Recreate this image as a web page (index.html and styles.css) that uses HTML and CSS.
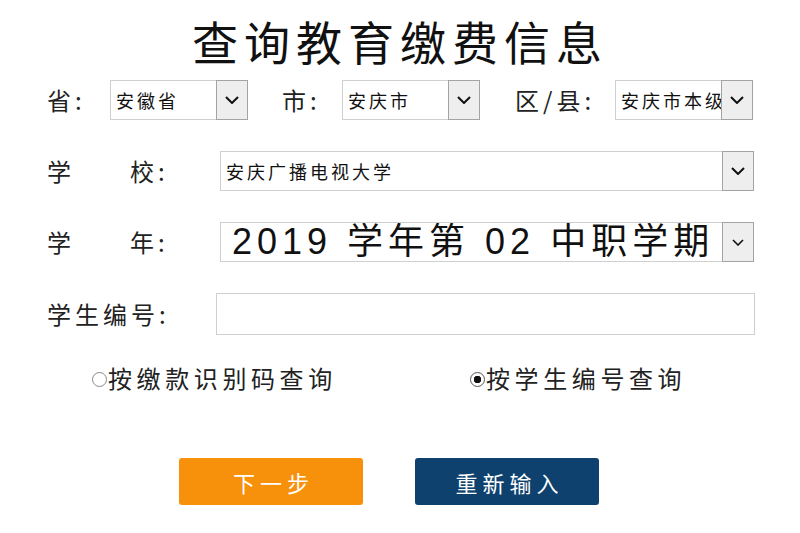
FILE: index.html
```html
<!DOCTYPE html>
<html lang="zh-CN">
<head>
    <meta charset="UTF-8">
    <meta name="viewport" content="width=device-width, initial-scale=1.0">
    <title>查询教育缴费信息</title>
    <link rel="stylesheet" href="styles.css">
</head>
<body>
    <div class="page">
        <h1>查询教育缴费信息</h1>

        <!-- 省 / 市 / 区县 -->
        <div class="row region-row">
            <label class="lbl lbl-prov">省:</label>
            <div class="select sel-small">
                <select><option>安徽省</option></select>
                <span class="arrow"><svg width="14" height="8" viewBox="0 0 14 8"><polyline points="1,1 7,7 13,1" fill="none" stroke="#111" stroke-width="2"/></svg></span>
            </div>
            <label class="lbl lbl-city">市:</label>
            <div class="select sel-small">
                <select><option>安庆市</option></select>
                <span class="arrow"><svg width="14" height="8" viewBox="0 0 14 8"><polyline points="1,1 7,7 13,1" fill="none" stroke="#111" stroke-width="2"/></svg></span>
            </div>
            <label class="lbl lbl-area">区/县:</label>
            <div class="select sel-small">
                <select><option>安庆市本级</option></select>
                <span class="arrow"><svg width="14" height="8" viewBox="0 0 14 8"><polyline points="1,1 7,7 13,1" fill="none" stroke="#111" stroke-width="2"/></svg></span>
            </div>
        </div>

        <div class="row">
            <label class="lbl lbl-wide"><span>学</span><span>校:</span></label>
            <div class="select sel-wide">
                <select><option>安庆广播电视大学</option></select>
                <span class="arrow"><svg width="14" height="8" viewBox="0 0 14 8"><polyline points="1,1 7,7 13,1" fill="none" stroke="#111" stroke-width="2"/></svg></span>
            </div>
        </div>

        <div class="row">
            <label class="lbl lbl-wide"><span>学</span><span>年:</span></label>
            <div class="select sel-wide sel-year">
                <select><option>2019 学年第 02 中职学期</option></select>
                <span class="arrow"><svg width="12" height="7" viewBox="0 0 12 7"><polyline points="1,1 6,6 11,1" fill="none" stroke="#111" stroke-width="1.6"/></svg></span>
            </div>
        </div>

        <div class="row">
            <label class="lbl lbl-id">学生编号:</label>
            <input type="text" class="text-input">
        </div>

        <div class="radio-row">
            <label class="radio-opt"><input type="radio" name="queryType">按缴款识别码查询</label>
            <label class="radio-opt"><input type="radio" name="queryType" checked>按学生编号查询</label>
        </div>

        <div class="btn-row">
            <button class="btn btn-next">下一步</button>
            <button class="btn btn-reset">重新输入</button>
        </div>
    </div>
</body>
</html>
```

FILE: styles.css
```css
/* 查询页 */
body {
    margin: 0;
    background-color: #ffffff;
    font-family: "Noto Sans CJK SC", "Liberation Sans", sans-serif;
    color: #222;
}

.page {
    width: 800px;
}

h1 {
    margin: 14px 0 0;
    font-size: 46px;
    line-height: 52px;
    font-weight: normal;
    letter-spacing: 6px;
    text-align: center;
    color: #111;
}

.row {
    display: flex;
    align-items: center;
    padding-left: 47px;
    margin-top: 31px;
}

.region-row {
    margin-top: 14px;
}

.lbl {
    flex: none;
    font-size: 24px;
    letter-spacing: 4px;
    line-height: 30px;
    white-space: nowrap;
}

.lbl-prov { width: 63px; }
.lbl-city { width: 60px; margin-left: 34px; }
.lbl-area { width: 100px; margin-left: 35px; }

.lbl-wide {
    width: 173px;
    display: flex;
}

.lbl-wide span:first-child {
    width: 83px;
}

.lbl-id {
    width: 169px;
}

/* select with grey arrow box */
.select {
    display: flex;
    height: 40px;
    box-sizing: border-box;
    border: 1px solid #cfcfcf;
    background-color: #fff;
}

.select select {
    flex: 1;
    min-width: 0;
    appearance: none;
    -webkit-appearance: none;
    border: none;
    outline: none;
    background: transparent;
    padding: 0 0 0 5px;
    font-family: inherit;
    font-size: 18px;
    letter-spacing: 3px;
    color: #111;
}

.select .arrow {
    flex: none;
    width: 30px;
    margin: -1px -1px -1px 0;
    border: 1px solid #a3a3a3;
    background-color: #eeeeee;
    display: flex;
    align-items: center;
    justify-content: center;
}

.sel-small {
    width: 138px;
}

.sel-wide {
    width: 534px;
}

.sel-year select {
    font-family: "Liberation Sans", "Noto Sans CJK SC", sans-serif;
    font-size: 36px;
    line-height: 38px;
    letter-spacing: 5px;
    padding-left: 11px;
}

.text-input {
    width: 539px;
    height: 42px;
    box-sizing: border-box;
    border: 1px solid #cfcfcf;
    outline: none;
    padding: 0 8px;
    font-size: 16px;
}

/* radios */
.radio-row {
    display: grid;
    grid-template-columns: 378px auto;
    padding-left: 92px;
    margin-top: 30px;
    height: 26px;
}

.radio-opt {
    display: flex;
    align-items: center;
    font-size: 24px;
    letter-spacing: 4.6px;
    line-height: 26px;
    white-space: nowrap;
}

.radio-opt input {
    appearance: none;
    -webkit-appearance: none;
    width: 15px;
    height: 15px;
    margin: 2px 1px 0 0;
    border: 1px solid #8a8a8a;
    border-radius: 50%;
    box-sizing: border-box;
    background: #fff;
}

.radio-opt input:checked {
    border-color: #555;
    background: radial-gradient(circle, #111 0, #111 3.5px, #fff 4px);
}

/* buttons */
.btn-row {
    display: flex;
    gap: 52px;
    padding-left: 179px;
    margin-top: 67px;
}

.btn {
    width: 184px;
    height: 47px;
    border: none;
    border-radius: 3px;
    color: #ffffff;
    font-family: inherit;
    font-size: 22px;
    letter-spacing: 5px;
    padding: 0 0 0 5px;
    cursor: pointer;
}

.btn-next {
    background-color: #f7900b;
}

.btn-reset {
    background-color: #0e416e;
}
```
